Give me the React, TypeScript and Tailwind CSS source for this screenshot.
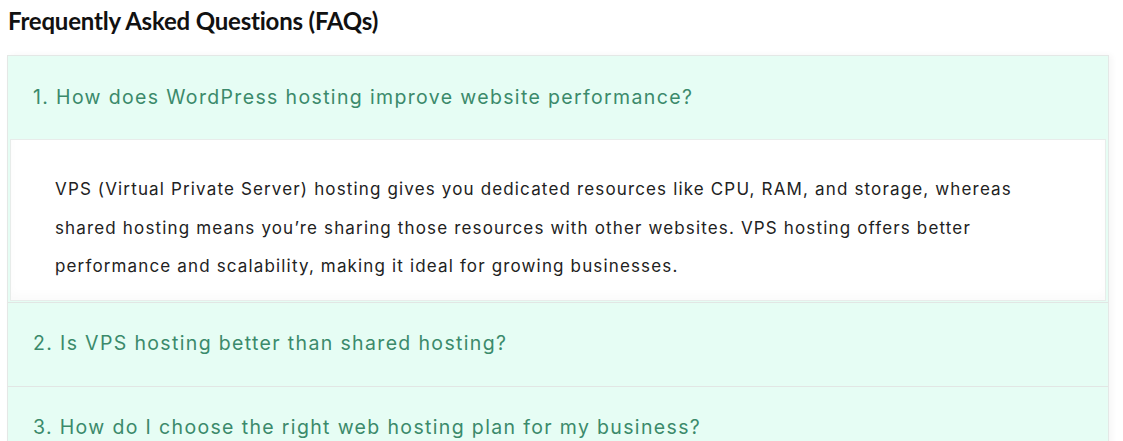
const faqs = [
  {
    q: "1. How does WordPress hosting improve website performance?",
    a: "VPS (Virtual Private Server) hosting gives you dedicated resources like CPU, RAM, and storage, whereas shared hosting means you’re sharing those resources with other websites. VPS hosting offers better performance and scalability, making it ideal for growing businesses.",
    open: true,
  },
  { q: "2. Is VPS hosting better than shared hosting?", a: "", open: false },
  { q: "3. How do I choose the right web hosting plan for my business?", a: "", open: false },
];

export default function App() {
  return (
    <div className="h-[441px] overflow-hidden bg-white pl-[8px] pr-[14px] pt-[6px]">
      <h2 className="font-['Lato',sans-serif] text-[24px] font-bold leading-[29px] tracking-[-0.2px] text-[#111]">
        Frequently Asked Questions (FAQs)
      </h2>
      <div className="-ml-px mt-[20px] border border-[#e4e8e6] bg-[#e6fdf4] shadow-[3px_0_6px_rgba(0,0,0,0.04)]">
        {faqs.map((f, i) => (
          <div key={i} className={i > 0 ? "border-t border-[#e2e6e4]" : ""}>
            <div className="flex h-[83px] items-center pl-[25px] font-['Inter',sans-serif] text-[19.5px] tracking-[1.35px] text-[#3b8a6b]">
              {f.q}
            </div>
            {f.open && (
              <div className="mx-[2px] mb-[1px] border border-[#e8ecea] bg-white pl-[44px] pr-[66px] pt-[30px] pb-[14px] shadow-[inset_0_-6px_8px_rgba(0,0,0,0.02)]">
                <p className="font-['Inter',sans-serif] text-[17px] leading-[38.5px] tracking-[1.15px] text-[#222]">{f.a}</p>
              </div>
            )}
          </div>
        ))}
      </div>
    </div>
  );
}
